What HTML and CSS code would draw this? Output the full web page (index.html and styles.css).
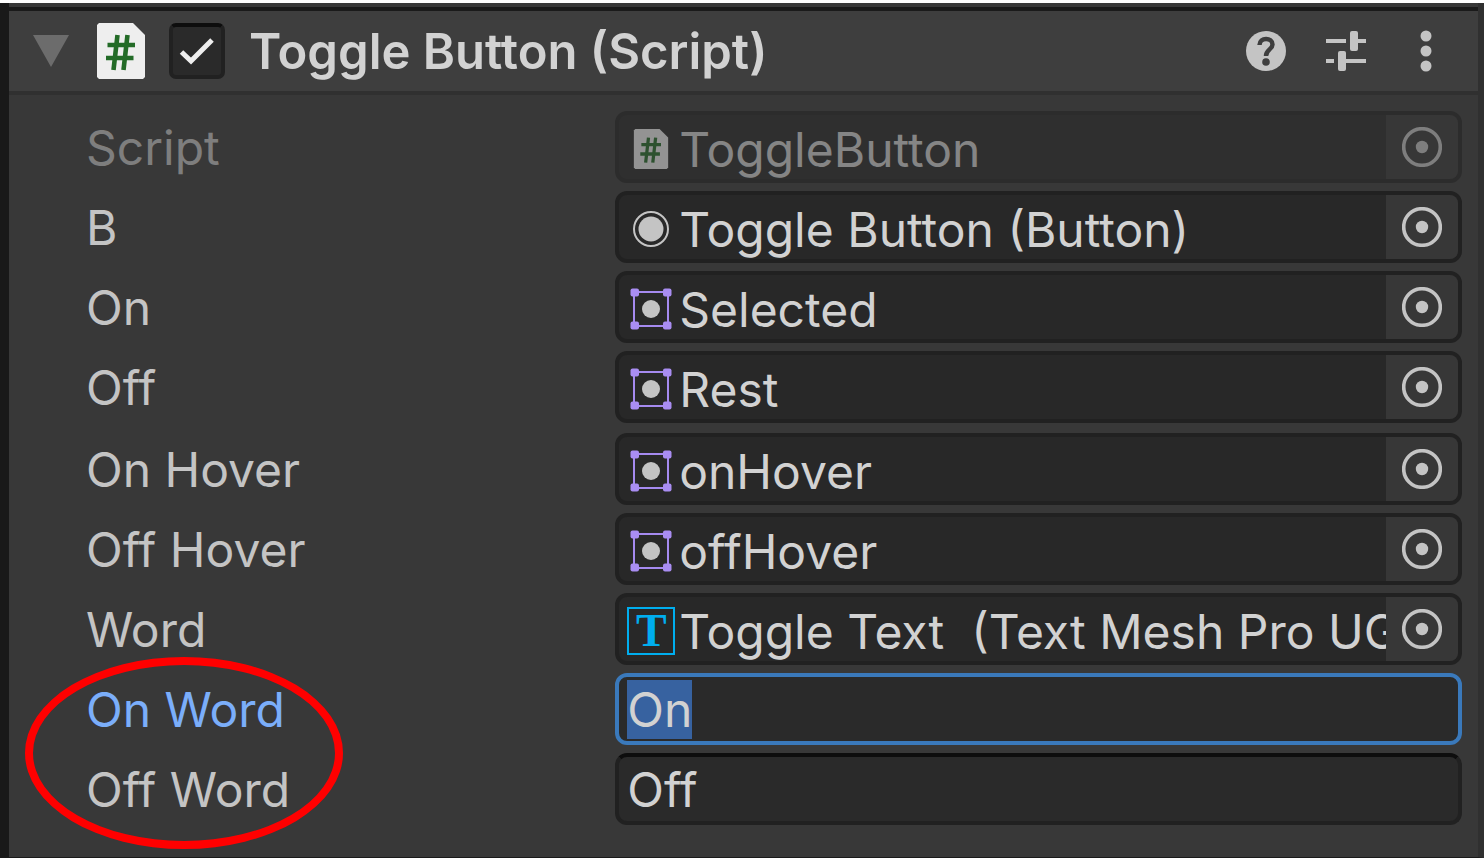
FILE: index.html
```html
<!DOCTYPE html>
<html lang="en">
<head>
<meta charset="utf-8">
<title>Toggle Button (Script)</title>
<link rel="stylesheet" href="styles.css">
</head>
<body>
<svg class="defs" aria-hidden="true">
  <symbol id="script" viewBox="0 0 48 56">
    <path fill="#eee" d="M2 0H36L48 12V54L46 56H2L0 54V2Z"/>
    <path fill="none" stroke="#236b27" stroke-width="4.600" d="M20.500 12L16.500 47M30.500 12L26.500 47M10.500 22H38M9 35H36.500"/>
  </symbol>
  <symbol id="button" viewBox="0 0 48 48">
    <circle cx="24" cy="24" r="17" fill="none" stroke="#c4c4c4" stroke-width="2"/>
    <circle cx="24" cy="24" r="12.500" fill="#c4c4c4"/>
  </symbol>
  <symbol id="rect" viewBox="0 0 48 48">
    <path fill="none" stroke="#a58af0" stroke-width="2" d="M7 7H41V41H7Z"/>
    <g fill="#a98df2"><rect x="3.500" y="3.500" width="8.500" height="8" rx="2"/><rect x="36" y="3.500" width="8.500" height="8" rx="2"/><rect x="3.500" y="36.500" width="8.500" height="8" rx="2"/><rect x="36" y="36.500" width="8.500" height="8" rx="2"/></g>
    <circle cx="24" cy="24" r="9" fill="#c4c4c4"/>
  </symbol>
  <symbol id="pick" viewBox="0 0 40 40">
    <circle cx="20" cy="20" r="18.300" fill="none" stroke="#c4c4c4" stroke-width="3.600"/>
    <circle cx="20" cy="20" r="6.200" fill="#c4c4c4"/>
  </symbol>
</svg>
<main class="inspector">
  <header class="header">
    <button class="foldout" type="button" aria-label="Collapse component"><svg viewBox="0 0 36 32"><path fill="#6c6c6c" d="M0 0H36L18 32Z"/></svg></button>
    <svg class="script-icon" aria-hidden="true"><use href="#script"/></svg>
    <label class="enable">
      <input class="enable-box" type="checkbox" checked aria-label="Component enabled">
      <svg class="enable-tick" viewBox="0 0 56 56" aria-hidden="true"><path fill="none" stroke="#eee" stroke-width="5" d="M12.500 29L22 38L43 17"/></svg>
    </label>
    <h1 class="title">Toggle Button (Script)</h1>
    <div class="tools">
      <button type="button" class="tool" aria-label="Help"><svg viewBox="0 0 40 40"><circle cx="20" cy="20" r="20" fill="#c4c4c4"/><path fill="none" stroke="#3e3e3e" stroke-width="4.500" d="M13.500 14C13.500 6 26.500 6 26.500 13.500C26.500 18.500 20 18.500 20 25"/><circle cx="20" cy="31" r="3.800" fill="#3e3e3e"/></svg></button>
      <button type="button" class="tool" aria-label="Presets"><svg viewBox="0 0 40 40"><path fill="none" stroke="#c4c4c4" stroke-width="4" d="M0 10H20M32 10H40M0 30H8M20 30H40"/><rect x="24" y="0" width="8" height="20" rx="2" fill="#c4c4c4"/><rect x="12" y="20" width="8" height="20" rx="2" fill="#c4c4c4"/></svg></button>
      <button type="button" class="tool" aria-label="More options"><svg viewBox="0 0 40 40"><g fill="#c4c4c4"><circle cx="20" cy="5" r="5.500"/><circle cx="20" cy="20" r="5.500"/><circle cx="20" cy="35" r="5.500"/></g></svg></button>
    </div>
  </header>
  <form class="body">
    <div class="group">
      <div class="row row-disabled">
        <label class="label" for="f-script">Script</label>
        <div class="object"><button class="value" id="f-script" type="button" disabled><svg class="icon icon-script" aria-hidden="true"><use href="#script"/></svg><span class="name">ToggleButton</span></button><button class="picker" type="button" disabled aria-label="Select script"><svg><use href="#pick"/></svg></button></div>
      </div>
      <div class="row">
        <label class="label" for="f-b">B</label>
        <div class="object"><button class="value" id="f-b" type="button"><svg class="icon" aria-hidden="true"><use href="#button"/></svg><span class="name">Toggle Button (Button)</span></button><button class="picker" type="button" aria-label="Select B"><svg><use href="#pick"/></svg></button></div>
      </div>
      <div class="row">
        <label class="label" for="f-on">On</label>
        <div class="object"><button class="value" id="f-on" type="button"><svg class="icon" aria-hidden="true"><use href="#rect"/></svg><span class="name">Selected</span></button><button class="picker" type="button" aria-label="Select On"><svg><use href="#pick"/></svg></button></div>
      </div>
      <div class="row">
        <label class="label" for="f-off">Off</label>
        <div class="object"><button class="value" id="f-off" type="button"><svg class="icon" aria-hidden="true"><use href="#rect"/></svg><span class="name">Rest</span></button><button class="picker" type="button" aria-label="Select Off"><svg><use href="#pick"/></svg></button></div>
      </div>
    </div>
    <div class="group">
      <div class="row">
        <label class="label" for="f-onhover">On Hover</label>
        <div class="object"><button class="value" id="f-onhover" type="button"><svg class="icon" aria-hidden="true"><use href="#rect"/></svg><span class="name">onHover</span></button><button class="picker" type="button" aria-label="Select On Hover"><svg><use href="#pick"/></svg></button></div>
      </div>
      <div class="row">
        <label class="label" for="f-offhover">Off Hover</label>
        <div class="object"><button class="value" id="f-offhover" type="button"><svg class="icon" aria-hidden="true"><use href="#rect"/></svg><span class="name">offHover</span></button><button class="picker" type="button" aria-label="Select Off Hover"><svg><use href="#pick"/></svg></button></div>
      </div>
      <div class="row">
        <label class="label" for="f-word">Word</label>
        <div class="object"><button class="value" id="f-word" type="button"><span class="icon icon-text" aria-hidden="true">T</span><span class="name">Toggle Text  (Text Mesh Pro UGUI)</span></button><button class="picker" type="button" aria-label="Select Word"><svg><use href="#pick"/></svg></button></div>
      </div>
      <div class="words">
        <div class="row">
          <label class="label label-active" for="f-onword">On Word</label>
          <input class="text" id="f-onword" type="text" value="On" autocomplete="off" spellcheck="false">
        </div>
        <div class="row">
          <label class="label" for="f-offword">Off Word</label>
          <input class="text" id="f-offword" type="text" value="Off" autocomplete="off" spellcheck="false">
        </div>
        <div class="ring" aria-hidden="true"></div>
      </div>
    </div>
  </form>
</main>
<script src="main.js"></script>
</body>
</html>
```
FILE: styles.css
```css
* {
  box-sizing: border-box;
}

body {
  margin: 0;
  padding-top: 3px;
  min-height: 100vh;
  display: flex;
  background: #fff;
  color: #c4c4c4;
  font: 400 48px/58px Inter, "Liberation Sans", sans-serif;
}

button,
input {
  margin: 0;
  padding: 0;
  border: 0;
  background: none;
  color: inherit;
  font: inherit;
}

svg {
  display: block;
}

.defs {
  position: absolute;
  width: 0;
  height: 0;
}

.inspector {
  flex: 1;
  min-width: 0;
  padding-top: 4px;
  border-left: 9px solid #191919;
  border-right: 6px solid #303030;
  border-bottom: 1px solid #1a1a1a;
  background: #383838;
}

.header {
  display: flex;
  align-items: center;
  height: 88px;
  padding: 0 32px 0 24px;
  border-top: 4px solid #1a1a1a;
  border-bottom: 4px solid #303030;
  background: #3e3e3e;
}

.foldout {
  width: 36px;
  height: 32px;
  margin-right: 28px;
}

.foldout svg {
  width: 36px;
  height: 32px;
}

.script-icon {
  width: 48px;
  height: 56px;
  margin-right: 24px;
}

.enable {
  display: grid;
  margin-right: 24px;
}

.enable-box,
.enable-tick {
  grid-area: 1 / 1;
  width: 56px;
  height: 56px;
}

.enable-box {
  appearance: none;
  border: 4px solid #212121;
  border-top-color: #0d0d0d;
  border-radius: 7px;
  background: #2a2a2a;
}

.enable-tick {
  pointer-events: none;
}

.title {
  flex: 1;
  margin: 0;
  padding-top: 2px;
  color: #d2d2d2;
  font-size: 49px;
  font-weight: 600;
  white-space: nowrap;
}

.tools {
  display: flex;
  gap: 40px;
}

.tool,
.tool svg {
  width: 40px;
  height: 40px;
}

.tool svg {
  overflow: visible;
}

.body {
  display: flex;
  flex-direction: column;
  gap: 10px;
  padding: 16px 16px 32px 77px;
}

.group,
.words {
  display: flex;
  flex-direction: column;
  gap: 8px;
}

.words {
  position: relative;
}

.row {
  display: grid;
  grid-template-columns: 5fr 8fr;
  align-items: center;
}

.row-disabled {
  opacity: 0.5;
}

.label {
  padding-top: 2px;
}

.label-active {
  color: #7baefa;
}

.object,
.text {
  width: 100%;
  min-width: 0;
  height: 72px;
  border: 4px solid #212121;
  border-radius: 12px;
  background: #282828;
  color: #d2d2d2;
}

.object {
  display: flex;
  overflow: hidden;
}

.value {
  flex: 1;
  min-width: 0;
  display: flex;
  align-items: center;
  gap: 4px;
  padding: 4px 0 0 8px;
  overflow: hidden;
  text-align: left;
}

.icon {
  flex: none;
  width: 48px;
  height: 48px;
}

.icon-script {
  height: 40px;
}

.icon-text {
  border: 2px solid #00aeef;
  color: #00aeef;
  font: 700 46px/44px "Liberation Serif", serif;
  text-align: center;
}

.name {
  padding-top: 2px;
  white-space: pre;
}

.picker {
  flex: none;
  display: grid;
  place-items: center;
  width: 72px;
  background: #373737;
}

.picker svg {
  width: 40px;
  height: 40px;
}

.text {
  padding: 0 8px;
  border-top-color: #0d0d0d;
  background: #2a2a2a;
}

.text:focus {
  border-color: #3a79bb;
  outline: none;
}

.text::selection {
  background: #3762a0;
  color: #d2d2d2;
}

.ring {
  position: absolute;
  top: -16px;
  left: -61px;
  width: 318px;
  height: 192px;
  border: 8px solid #f00;
  border-radius: 50%;
  pointer-events: none;
}
```
FILE: main.js
```js
const field = document.getElementById("f-onword");
field.focus();
field.select();
```
